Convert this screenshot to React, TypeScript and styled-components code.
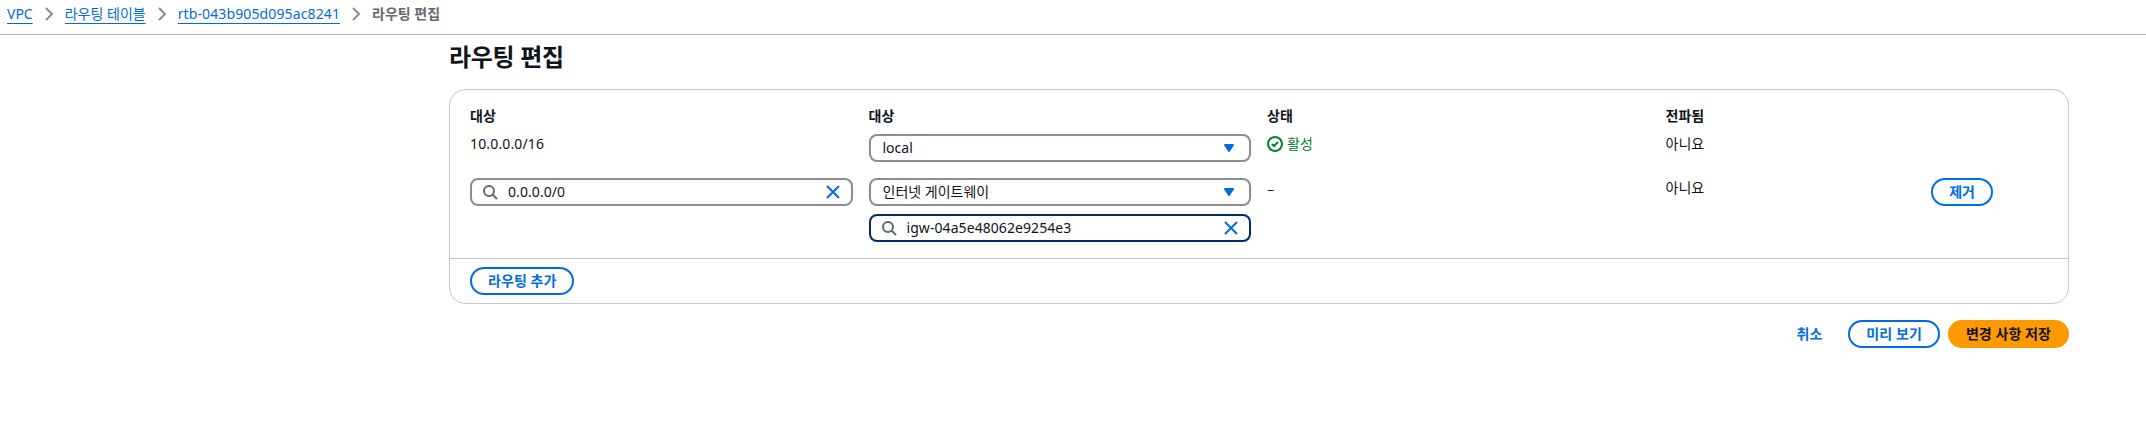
import React from "react";
import styled, { createGlobalStyle, css } from "styled-components";

const GlobalStyle = createGlobalStyle`
  *, *::before, *::after { box-sizing: border-box; }
  body {
    margin: 0;
    background: #fff;
    color: #0f141a;
    font-family: "Noto Sans", "Noto Sans CJK KR", sans-serif;
    font-size: 14px;
    line-height: 20px;
  }
`;

const Breadcrumbs = styled.nav`
  display: flex;
  align-items: center;
  height: 35px;
  padding: 0 7px 7px;
  border-bottom: 1px solid #b4b4bb;
`;

const Crumb = styled.a<{ $code?: boolean }>`
  color: #006ce0;
  letter-spacing: ${(p) => (p.$code ? "0.12px" : "normal")};
  text-decoration: underline;
  text-decoration-thickness: 1px;
  text-underline-offset: 4px;
`;

const CurrentCrumb = styled.span`
  color: #656871;
  font-weight: 700;
`;

const Icon = styled.svg`
  display: block;
  flex: none;
  width: 16px;
  height: 16px;
  fill: none;
  stroke: currentColor;
  stroke-width: 2;
`;

const Separator = styled(Icon)`
  margin: 0 8px;
  color: #8c8c94;
`;

const Main = styled.main`
  width: 1620px;
  margin: 7px 0 0 449px;
`;

const Title = styled.h1`
  margin: 0 0 17px;
  font-size: 24px;
  font-weight: 700;
  line-height: 30px;
  letter-spacing: -0.3px;
`;

const Card = styled.section`
  border: 1px solid #c6c6cd;
  border-radius: 16px;
`;

const Routes = styled.div`
  padding: 16px 20px;
`;

const RouteRow = styled.div<{ $gap?: number }>`
  display: grid;
  grid-template-columns: repeat(12, minmax(0, 1fr));
  column-gap: 16px;
  align-items: start;
  margin-top: ${(p) => p.$gap ?? 0}px;
`;

const Cell = styled.div<{ $span?: number; $heading?: boolean }>`
  grid-column: span ${(p) => p.$span ?? 3};
  display: flex;
  flex-direction: column;
  align-items: stretch;
  gap: 8px;
  font-weight: ${(p) => (p.$heading ? 700 : 400)};
`;

const Address = styled.span`
  letter-spacing: 0.15px;
`;

const EmptyValue = styled.span`
  font-family: "Noto Sans CJK KR", sans-serif;
`;

const Field = styled.div<{ $focused?: boolean }>`
  display: flex;
  align-items: center;
  height: 28px;
  padding: 0 12px;
  border: 2px solid ${(p) => (p.$focused ? "#002b66" : "#8c8c94")};
  border-radius: 8px;
`;

const FieldText = styled.span<{ $inset?: boolean }>`
  flex: 1;
  margin-left: ${(p) => (p.$inset ? 10 : 0)}px;
  letter-spacing: ${(p) => (p.$inset ? "0.07px" : "normal")};
`;

const SearchMark = styled(Icon)`
  margin-left: -2px;
  color: #656871;
`;

const ClearMark = styled(Icon)`
  margin-right: -2px;
  color: #006ce0;
`;

const Caret = styled(Icon)`
  color: #006ce0;
`;

const Status = styled.div`
  display: flex;
  align-items: center;
  gap: 4px;
  color: #00802f;
`;

const buttonVariants = {
  normal: css`color: #006ce0; border-color: #006ce0; background: #fff;`,
  link: css`color: #006ce0; border-color: transparent; background: transparent;`,
  primary: css`color: #0f141a; border-color: #ff9900; background: #ff9900;`,
};

const Button = styled.button<{ $variant?: keyof typeof buttonVariants }>`
  align-self: flex-start;
  height: 28px;
  padding: 0 16px;
  border: 2px solid;
  border-radius: 20px;
  font: inherit;
  font-weight: 700;
  line-height: 20px;
  letter-spacing: 0.07px;
  white-space: nowrap;
  ${(p) => buttonVariants[p.$variant ?? "normal"]}
`;

const CardFooter = styled.div`
  display: flex;
  padding: 8px 20px;
  border-top: 1px solid #c6c6cd;
`;

const Actions = styled.div`
  display: flex;
  justify-content: flex-end;
  gap: 8px;
  margin-top: 16px;
`;

const Chevron = () => (
  <Separator viewBox="0 0 16 16"><path d="M5 2l6 6-6 6" /></Separator>
);

const SelectField = ({ value }: { value: string }) => (
  <Field>
    <FieldText>{value}</FieldText>
    <Caret viewBox="0 0 16 16">
      <path d="M4 5h8l-4 6-4-6z" fill="currentColor" strokeLinejoin="round" />
    </Caret>
  </Field>
);

const SearchField = ({ value, focused }: { value: string; focused?: boolean }) => (
  <Field $focused={focused}>
    <SearchMark viewBox="0 0 16 16">
      <circle cx="7" cy="7" r="5" />
      <path d="M10.5 10.5l4.5 4.5" />
    </SearchMark>
    <FieldText $inset>{value}</FieldText>
    <ClearMark viewBox="0 0 16 16"><path d="M2 2l12 12M14 2L2 14" /></ClearMark>
  </Field>
);

export default function App() {
  return (
    <>
      <GlobalStyle />
      <Breadcrumbs>
        <Crumb>VPC</Crumb>
        <Chevron />
        <Crumb>라우팅 테이블</Crumb>
        <Chevron />
        <Crumb $code>rtb-043b905d095ac8241</Crumb>
        <Chevron />
        <CurrentCrumb>라우팅 편집</CurrentCrumb>
      </Breadcrumbs>
      <Main>
        <Title>라우팅 편집</Title>
        <Card>
          <Routes>
            <RouteRow>
              <Cell $heading>대상</Cell>
              <Cell $heading>대상</Cell>
              <Cell $heading>상태</Cell>
              <Cell $heading $span={2}>전파됨</Cell>
            </RouteRow>
            <RouteRow $gap={8}>
              <Cell><Address>10.0.0.0/16</Address></Cell>
              <Cell><SelectField value="local" /></Cell>
              <Cell>
                <Status>
                  <Icon viewBox="0 0 16 16">
                    <circle cx="8" cy="8" r="7" />
                    <path d="M5 8l2 2 4-4" />
                  </Icon>
                  활성
                </Status>
              </Cell>
              <Cell $span={2}>아니요</Cell>
            </RouteRow>
            <RouteRow $gap={16}>
              <Cell><SearchField value="0.0.0.0/0" /></Cell>
              <Cell>
                <SelectField value="인터넷 게이트웨이" />
                <SearchField value="igw-04a5e48062e9254e3" focused />
              </Cell>
              <Cell><EmptyValue>–</EmptyValue></Cell>
              <Cell $span={2}>아니요</Cell>
              <Cell $span={1}><Button>제거</Button></Cell>
            </RouteRow>
          </Routes>
          <CardFooter><Button>라우팅 추가</Button></CardFooter>
        </Card>
        <Actions>
          <Button $variant="link">취소</Button>
          <Button>미리 보기</Button>
          <Button $variant="primary">변경 사항 저장</Button>
        </Actions>
      </Main>
    </>
  );
}
